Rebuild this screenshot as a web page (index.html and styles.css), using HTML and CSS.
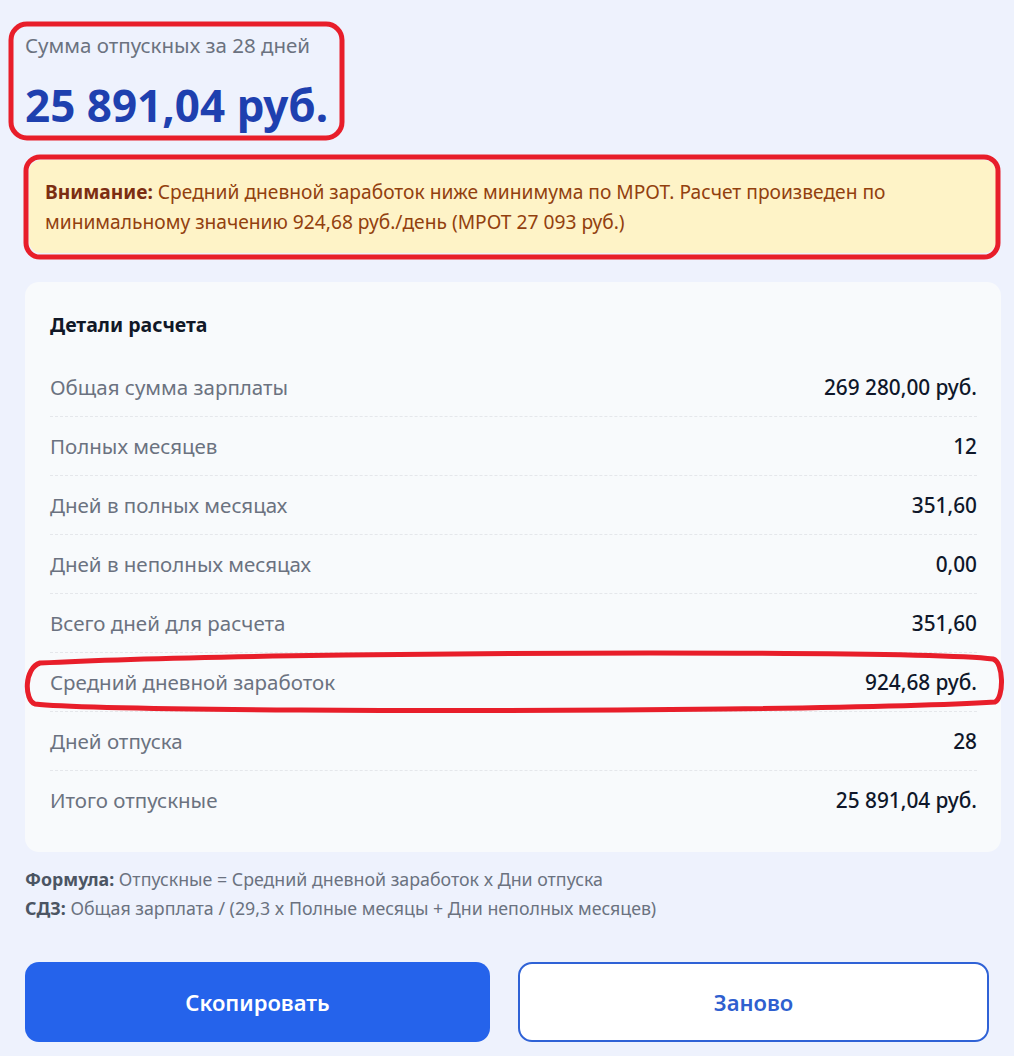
FILE: index.html
```html
<!DOCTYPE html>
<html lang="ru">
<head>
<meta charset="utf-8">
<link rel="stylesheet" href="styles.css">
</head>
<body>
<div class="page">
  <section class="result">
    <div class="result-label">Сумма отпускных за 28 дней</div>
    <div class="result-value">25 891,04 руб.</div>
  </section>
  <div class="warning"><b>Внимание:</b> Средний дневной заработок ниже минимума по МРОТ. Расчет произведен по минимальному значению 924,68 руб./день (МРОТ 27 093 руб.)</div>
  <section class="details">
    <h3 class="details-title">Детали расчета</h3>
    <div class="row"><span class="lbl">Общая сумма зарплаты</span><span class="val">269 280,00 руб.</span></div>
    <div class="row"><span class="lbl">Полных месяцев</span><span class="val">12</span></div>
    <div class="row"><span class="lbl">Дней в полных месяцах</span><span class="val">351,60</span></div>
    <div class="row"><span class="lbl">Дней в неполных месяцах</span><span class="val">0,00</span></div>
    <div class="row"><span class="lbl">Всего дней для расчета</span><span class="val">351,60</span></div>
    <div class="row"><span class="lbl">Средний дневной заработок</span><span class="val">924,68 руб.</span></div>
    <div class="row"><span class="lbl">Дней отпуска</span><span class="val">28</span></div>
    <div class="row last"><span class="lbl">Итого отпускные</span><span class="val">25 891,04 руб.</span></div>
  </section>
  <div class="formula">
    <p><b>Формула:</b> Отпускные = Средний дневной заработок x Дни отпуска</p>
    <p><b>СДЗ:</b> Общая зарплата / (29,3 x Полные месяцы + Дни неполных месяцев)</p>
  </div>
  <div class="actions">
    <button class="btn btn-primary">Скопировать</button>
    <button class="btn btn-outline">Заново</button>
  </div>
</div>
<svg class="marks" width="1014" height="1056" viewBox="0 0 1014 1056">
  <rect x="11" y="24" width="331" height="114" rx="16" fill="none" stroke="#e81e2a" stroke-width="5"/>
  <rect x="26" y="157" width="972" height="100" rx="14" fill="none" stroke="#e81e2a" stroke-width="5"/>
  <path d="M40 663 C 150 657, 400 653, 650 653 C 850 653, 960 655, 993 659 C 1004 662, 1004 698, 995 702 C 900 708, 600 712, 300 710 C 150 709, 60 707, 35 704 C 24 700, 24 668, 40 663 Z" fill="none" stroke="#e81e2a" stroke-width="5"/>
</svg>
</body>
</html>
```
FILE: styles.css
```css
* { box-sizing: border-box; }
html, body { margin: 0; padding: 0; }
body {
  background: #eef2fd;
  font-family: "Noto Sans", "Open Sans", sans-serif;
  width: 1014px;
  height: 1056px;
  overflow: hidden;
  position: relative;
}
.page {
  padding: 32px 13px 0 25px;
  display: flex;
  flex-direction: column;
}
.result-label {
  font-size: 20.5px;
  line-height: 26px;
  color: #6b7280;
}
.result-value {
  margin-top: 22px;
  font-size: 44px;
  line-height: 50px;
  font-weight: 700;
  color: #1e40af;
}
.warning {
  margin-top: 30px;
  margin-left: 4px;
  margin-right: 5px;
  background: #fef3c7;
  color: #92400e;
  border-radius: 12px;
  padding: 17px 16px 16px 16px;
  font-size: 19.2px;
  line-height: 30px;
}
.warning b { font-weight: 700; color: #7c2d12; }
.details {
  margin-top: 29px;
  background: #f8fafc;
  border-radius: 14px;
  padding: 27px 24px 22px 25px;
}
.details-title {
  margin: 0 0 17.5px 0;
  font-size: 19.5px;
  line-height: 32px;
  font-weight: 700;
  color: #111827;
}
.row {
  display: flex;
  justify-content: space-between;
  align-items: center;
  height: 58.9px;
  border-bottom: 1px dashed #e5e7eb;
  font-size: 20.5px;
}
.row.last { border-bottom: none; }
.lbl { color: #6b7280; }
.val { color: #0f172a; font-weight: 500; font-size: 20.8px; }
.formula {
  margin-top: 13.5px;
  font-size: 17.8px;
  line-height: 29px;
  color: #6b7280;
}
.formula p { margin: 0; }
.formula b { color: #4b5563; font-weight: 700; }
.actions {
  margin-top: 38.5px;
  display: flex;
  gap: 28px;
}
.btn {
  height: 80px;
  border-radius: 14px;
  font-family: inherit;
  font-size: 22px;
  font-weight: 600;
}
.btn-primary {
  width: 465px;
  background: #2563eb;
  color: #fff;
  border: none;
}
.btn-outline {
  width: 471px;
  background: #fff;
  color: #2f5fcf;
  border: 2.5px solid #2f62d6;
}
.marks {
  position: absolute;
  left: 0;
  top: 0;
  pointer-events: none;
}
```
